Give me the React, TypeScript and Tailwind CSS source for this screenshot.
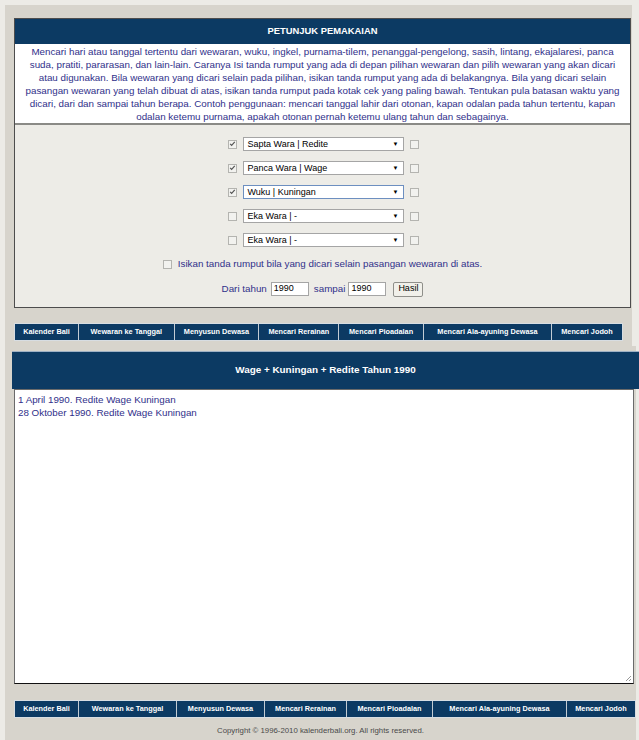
import React from "react";

const navItems = [
	"Kalender Bali",
	"Wewaran ke Tanggal",
	"Menyusun Dewasa",
	"Mencari Rerainan",
	"Mencari Pioadalan",
	"Mencari Ala-ayuning Dewasa",
	"Mencari Jodoh",
];

const descLines = [
	"Mencari hari atau tanggal tertentu dari wewaran, wuku, ingkel, purnama-tilem, penanggal-pengelong, sasih, lintang, ekajalaresi, panca",
	"suda, pratiti, pararasan, dan lain-lain. Caranya Isi tanda rumput yang ada di depan pilihan wewaran dan pilih wewaran yang akan dicari",
	"atau digunakan. Bila wewaran yang dicari selain pada pilihan, isikan tanda rumput yang ada di belakangnya. Bila yang dicari selain",
	"pasangan wewaran yang telah dibuat di atas, isikan tanda rumput pada kotak cek yang paling bawah. Tentukan pula batasan waktu yang",
	"dicari, dari dan sampai tahun berapa. Contoh penggunaan: mencari tanggal lahir dari otonan, kapan odalan pada tahun tertentu, kapan",
	"odalan ketemu purnama, apakah otonan pernah ketemu ulang tahun dan sebagainya.",
];

const rows = [
	{ checked: true, label: "Sapta Wara | Redite", focus: false },
	{ checked: true, label: "Panca Wara | Wage", focus: false },
	{ checked: true, label: "Wuku | Kuningan", focus: true },
	{ checked: false, label: "Eka Wara | -", focus: false },
	{ checked: false, label: "Eka Wara | -", focus: false },
];

const results = [
	"1 April 1990. Redite Wage Kuningan",
	"28 Oktober 1990. Redite Wage Kuningan",
];

const Check = ({ checked }: { checked?: boolean }) => (
	<span className="inline-flex h-[9px] w-[9px] shrink-0 items-center justify-center border border-[#b4b4b0] bg-[#f2f2ef]">
		{checked && (
			<svg viewBox="0 0 9 9" className="h-[8px] w-[8px]">
				<path d="M1.5 4.2 L3.4 6.3 L7.4 1.8" stroke="#555" strokeWidth="1.5" fill="none" />
			</svg>
		)}
	</span>
);

const Select = ({ label, focus }: { label: string; focus?: boolean }) => (
	<div
		className={`flex h-[14px] w-[161px] items-center border bg-white pl-[4px] pr-[4px] text-[9px] text-black ${
			focus ? "border-[#6d8fc0]" : "border-[#a5a5a5]"
		}`}
	>
		<span className="flex-1 leading-none">{label}</span>
		<span className="text-[6px] leading-none">▼</span>
	</div>
);

const NavBar = ({ widths }: { widths: number[] }) => (
	<div className="flex border border-[#d7dde2] bg-[#c3ccd4]">
		{navItems.map((item, i) => (
			<div
				key={item}
				style={{ width: widths[i] }}
				className={`flex h-[16px] items-center justify-center bg-[#0c3a63] text-[7.3px] font-bold whitespace-nowrap text-white ${
					i > 0 ? "ml-px" : ""
				}`}
			>
				{item}
			</div>
		))}
	</div>
);

export default function App() {
	return (
		<div
			className="min-h-[740px] w-[639px] bg-[#ecebe6] pt-[5px] pl-[5px]"
			style={{ fontFamily: '"Liberation Sans", Arial, sans-serif' }}
		>
			{/* upper part */}
			<div className="w-[627px] bg-[#d7d4cc] px-[9px] pt-[13px] pb-[5px]">
				<div className="w-[617px] border border-[#4d4d4d]">
					<div className="flex h-[25px] items-center justify-center bg-[#0c3a63] text-[9.4px] font-bold text-white">
						PETUNJUK PEMAKAIAN
					</div>
					<div className="border-b-2 border-[#8a8a86] bg-white pt-px text-center text-[9.8px] leading-[13px] text-[#30308a]">
						{descLines.map((l) => (
							<div key={l} className="whitespace-nowrap">
								{l}
							</div>
						))}
					</div>
					<div className="flex flex-col items-center gap-[10px] bg-[#edece7] pt-[12px] pb-[11px]">
						{rows.map((r, i) => (
							<div key={i} className="flex h-[14px] items-center gap-[6px] pl-[1px]">
								<Check checked={r.checked} />
								<Select label={r.label} focus={r.focus} />
								<Check />
							</div>
						))}
						<div className="flex h-[14px] items-center gap-[6px] text-[9.8px] text-[#30308a]">
							<Check />
							<span>Isikan tanda rumput bila yang dicari selain pasangan wewaran di atas.</span>
						</div>
						<div className="mt-px flex h-[14px] items-center text-[9.8px] text-[#30308a]">
							<span>Dari tahun</span>
							<div className="ml-[4px] flex h-[14px] w-[38px] items-center border border-[#a5a5a5] bg-white pl-[2px] text-[9px] text-black">
								1990
							</div>
							<span className="ml-[5px]">sampai</span>
							<div className="ml-[3px] flex h-[14px] w-[38px] items-center border border-[#a5a5a5] bg-white pl-[2px] text-[9px] text-black">
								1990
							</div>
							<div className="ml-[7px] flex h-[15px] w-[30px] items-center justify-center rounded-[2px] border border-[#8f8f8a] bg-[#f1f0ea] text-[9px] text-black">
								Hasil
							</div>
						</div>
					</div>
				</div>
				<div className="mt-[15px]">
					<NavBar widths={[64, 96, 85, 80, 85, 129, 71]} />
				</div>
			</div>

			{/* lower part */}
			<div className="w-[631px] bg-[#d7d4cc] pt-[5px]">
				<div className="ml-[7px] flex h-[38px] w-[627px] items-center justify-center border-t border-[#9fb1c4] bg-[#0c3a63] text-[9.9px] font-bold text-white">
					Wage + Kuningan + Redite Tahun 1990
				</div>
				<div className="relative ml-[9px] h-[295px] w-[620px] border border-[#6a6a6a] border-b-[#111] bg-white px-[3px] pt-[3px] text-[9.8px] leading-[13px] text-[#30308a]">
					{results.map((r) => (
						<div key={r}>{r}</div>
					))}
					<svg viewBox="0 0 8 8" className="absolute right-[1px] bottom-[1px] h-[8px] w-[8px]">
						<path d="M7 2 L2 7 M7 5 L5 7" stroke="#999" strokeWidth="1" />
					</svg>
				</div>
				<div className="mt-[16px] ml-[9px]">
					<NavBar widths={[63, 97, 87, 81, 85, 133, 68]} />
				</div>
				<div className="flex h-[24px] items-end justify-center pb-[5px] text-[7.8px] text-[#4a4a4a]">
					Copyright © 1996-2010 kalenderbali.org. All rights reserved.
				</div>
			</div>
		</div>
	);
}
